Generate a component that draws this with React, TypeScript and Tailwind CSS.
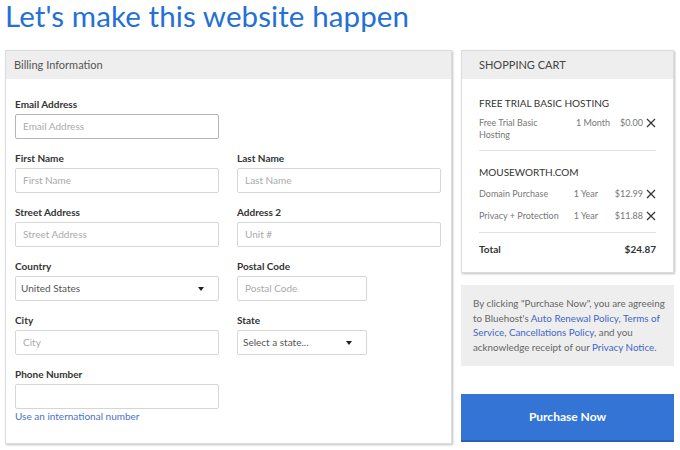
import React from "react";

const font = { fontFamily: "Lato, 'Open Sans', Arial, sans-serif" };

function Field({
  label,
  placeholder,
  width = "w-[204px]",
  strong = false,
}: {
  label: string;
  placeholder?: string;
  width?: string;
  strong?: boolean;
}) {
  return (
    <div className="flex flex-col">
      <span className="text-[10px] leading-[14px] font-bold text-[#333] mb-[3px]">{label}</span>
      <div
        className={`${width} h-[25px] rounded-[2px] border bg-white flex items-center px-[7px] text-[10px] text-[#aaa] ${
          strong ? "border-[#b5b5b5]" : "border-[#d6d6d6]"
        }`}
      >
        {placeholder}
      </div>
    </div>
  );
}

function Select({ label, value, width = "w-[204px]" }: { label: string; value: string; width?: string }) {
  return (
    <div className="flex flex-col">
      <span className="text-[10px] leading-[14px] font-bold text-[#333] mb-[3px]">{label}</span>
      <div
        className={`${width} h-[25px] rounded-[2px] border border-[#d6d6d6] bg-white flex items-center justify-between pl-[5px] pr-[14px] text-[10px] text-[#555]`}
      >
        <span>{value}</span>
        <svg width="6" height="4" viewBox="0 0 6 4">
          <path d="M0 0h6L3 4z" fill="#222" />
        </svg>
      </div>
    </div>
  );
}

function X() {
  return (
    <svg width="10" height="10" viewBox="0 0 10 10" className="ml-[3px] mt-[1px] shrink-0">
      <path d="M1 1l8 8M9 1l-8 8" stroke="#333" strokeWidth="1.2" />
    </svg>
  );
}

function CartRow({ name, period, price }: { name: React.ReactNode; period: string; price: string }) {
  return (
    <div className="flex items-start text-[9px] leading-[11.5px] text-[#777]">
      <span className="w-[97px]">{name}</span>
      <span className="w-[42px]">{period}</span>
      <span className="flex-1 text-right">{price}</span>
      <X />
    </div>
  );
}

export default function App() {
  return (
    <div className="w-[680px] h-[450px] bg-white overflow-hidden pl-[5px]" style={font}>
      <h1 className="text-[29.5px] leading-[34px] font-normal text-[#2470d6] tracking-[0.1px] -mt-[1px]">
        Let's make this website happen
      </h1>

      <div className="flex gap-[9px] mt-[17px]">
        {/* Billing */}
        <div className="w-[447px] h-[394px] border border-[#dcdcdc] bg-white shadow-[1px_1px_2px_rgba(0,0,0,0.25)]">
          <div className="h-[28px] bg-[#eeeeee] flex items-center px-[8px] text-[11px] text-[#555]">
            Billing Information
          </div>
          <div className="pt-[18px] pl-[9px]">
            <div className="grid grid-cols-[204px_204px] gap-x-[18px] gap-y-[12px]">
              <Field label="Email Address" placeholder="Email Address" strong />
              <div />
              <Field label="First Name" placeholder="First Name" />
              <Field label="Last Name" placeholder="Last Name" />
              <Field label="Street Address" placeholder="Street Address" />
              <Field label="Address 2" placeholder="Unit #" />
              <Select label="Country" value="United States" />
              <Field label="Postal Code" placeholder="Postal Code" width="w-[130px]" />
              <Field label="City" placeholder="City" />
              <Select label="State" value="Select a state..." width="w-[130px]" />
              <div className="flex flex-col">
                <Field label="Phone Number" />
                <a className="text-[10px] leading-[13px] text-[#4a73c9] mt-[1px]">Use an international number</a>
              </div>
            </div>
          </div>
        </div>

        {/* Right column */}
        <div className="w-[213px] flex flex-col">
          <div className="border border-[#dcdcdc] bg-white shadow-[1px_1px_2px_rgba(0,0,0,0.25)]">
            <div className="h-[28px] bg-[#eeeeee] flex items-center px-[17px] text-[11px] text-[#444]">
              SHOPPING CART
            </div>
            <div className="px-[17px] pt-[17px] pb-[16px]">
              <div className="text-[10px] leading-[14px] text-[#333] mb-[7px]">FREE TRIAL BASIC HOSTING</div>
              <CartRow
                name={
                  <>
                    Free Trial Basic
                    <br />
                    Hosting
                  </>
                }
                period="1 Month"
                price="$0.00"
              />
              <div className="border-t border-[#e2e2e2] mt-[10px] pt-[14px]">
                <div className="text-[10px] leading-[14px] text-[#333] mb-[9px]">MOUSEWORTH.COM</div>
                <div className="flex flex-col gap-[10px]">
                  <CartRow name="Domain Purchase" period="1 Year" price="$12.99" />
                  <CartRow name="Privacy + Protection" period="1 Year" price="$11.88" />
                </div>
              </div>
              <div className="border-t border-[#e2e2e2] mt-[11px] pt-[9px] flex justify-between text-[10px] leading-[14px] font-bold text-[#333]">
                <span>Total</span>
                <span>$24.87</span>
              </div>
            </div>
          </div>

          <div className="mt-[12px] bg-[#eeeeee] pl-[12px] pr-[6px] pt-[11px] pb-[12px] text-[9.8px] leading-[14.5px] text-[#666]">
            By clicking "Purchase Now", you are agreeing to Bluehost's{" "}
            <a className="text-[#3f66c6]">Auto Renewal Policy</a>, <a className="text-[#3f66c6]">Terms of</a>{" "}
            <a className="text-[#3f66c6]">Service</a>, <a className="text-[#3f66c6]">Cancellations Policy</a>, and
            you acknowledge receipt of our <a className="text-[#3f66c6]">Privacy Notice</a>.
          </div>

          <button className="mt-[28px] h-[48px] w-full bg-[#3474d4] border-b-2 border-[#2a60b8] text-white text-[12px] font-bold">
            Purchase Now
          </button>
        </div>
      </div>
    </div>
  );
}
